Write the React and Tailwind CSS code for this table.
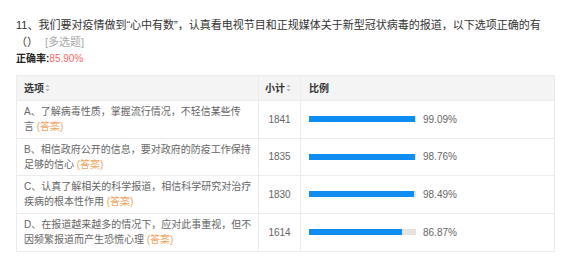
import React from 'react';

const rows = [
  { lines: ['A、了解病毒性质，掌握流行情况，不轻信某些传', '言'], count: 1841, pct: 99.09 },
  { lines: ['B、相信政府公开的信息，要对政府的防疫工作保持', '足够的信心'], count: 1835, pct: 98.76 },
  { lines: ['C、认真了解相关的科学报道，相信科学研究对治疗', '疾病的根本性作用'], count: 1830, pct: 98.49 },
  { lines: ['D、在报道越来越多的情况下，应对此事重视，但不', '因频繁报道而产生恐慌心理'], count: 1614, pct: 86.87 },
];

const SortIcon = () => (
  <svg className="ml-[1px] inline-block" width="5" height="8" viewBox="0 0 5 8">
    <path d="M2.5 0.5L4.5 3H0.5z" fill="#b5b5b5" />
    <path d="M2.5 7.5L4.5 5H0.5z" fill="#b5b5b5" />
  </svg>
);

const App = () => {
  return (
    <div className="w-[564px] h-[257px] bg-white pl-4 pt-[17px] font-['Liberation_Sans','Noto_Sans_CJK_SC',sans-serif] overflow-hidden">
      {/* Question */}
      <div className="w-[532px] text-[11px] leading-[17px] text-[#333]">
        <div>11、我们要对疫情做到“心中有数”，认真看电视节目和正规媒体关于新型冠状病毒的报道，以下选项正确的有</div>
        <div>
          <span>（）</span>
          <span className="ml-[7px] text-[#aaa]">[多选题]</span>
        </div>
      </div>
      <div className="text-[10px] leading-[14px] pt-[1px]">
        <span className="font-bold text-[#222]">正确率:</span>
        <span className="text-[#f66]">85.90%</span>
      </div>

      {/* Table */}
      <div className="mt-[9px] w-[539px] border border-[#ececec] text-[10px]">
        <div className="grid grid-cols-[242px_42px_1fr] h-[25px] bg-[#f4f4f4] font-bold text-[#333] border-b border-[#ececec]">
          <div className="flex items-center pl-[7px] border-r border-[#ececec]">选项<SortIcon /></div>
          <div className="flex items-center pl-[6px] border-r border-[#ececec]">小计<SortIcon /></div>
          <div className="flex items-center pl-[8px]">比例</div>
        </div>
        {rows.map((r, i) => (
          <div
            key={i}
            className={`grid grid-cols-[242px_42px_1fr] h-[37.5px] text-[#666] ${i < rows.length - 1 ? 'border-b border-[#ececec]' : ''}`}
          >
            <div className="flex flex-col justify-center pl-[7px] leading-[15px] border-r border-[#ececec]">
              <span>{r.lines[0]}</span>
              <span>
                {r.lines[1]} <span className="text-[#f0a35c]">(答案)</span>
              </span>
            </div>
            <div className="flex items-center justify-center border-r border-[#ececec]">{r.count}</div>
            <div className="flex items-center pl-[8px]">
              <div className="w-[107px] h-[6px] bg-[#e3e3e3]">
                <div className="h-full bg-[#0f8df0]" style={{ width: `${r.pct}%` }} />
              </div>
              <span className="ml-[7px]">{r.pct.toFixed(2)}%</span>
            </div>
          </div>
        ))}
      </div>
    </div>
  );
};

export default App;
